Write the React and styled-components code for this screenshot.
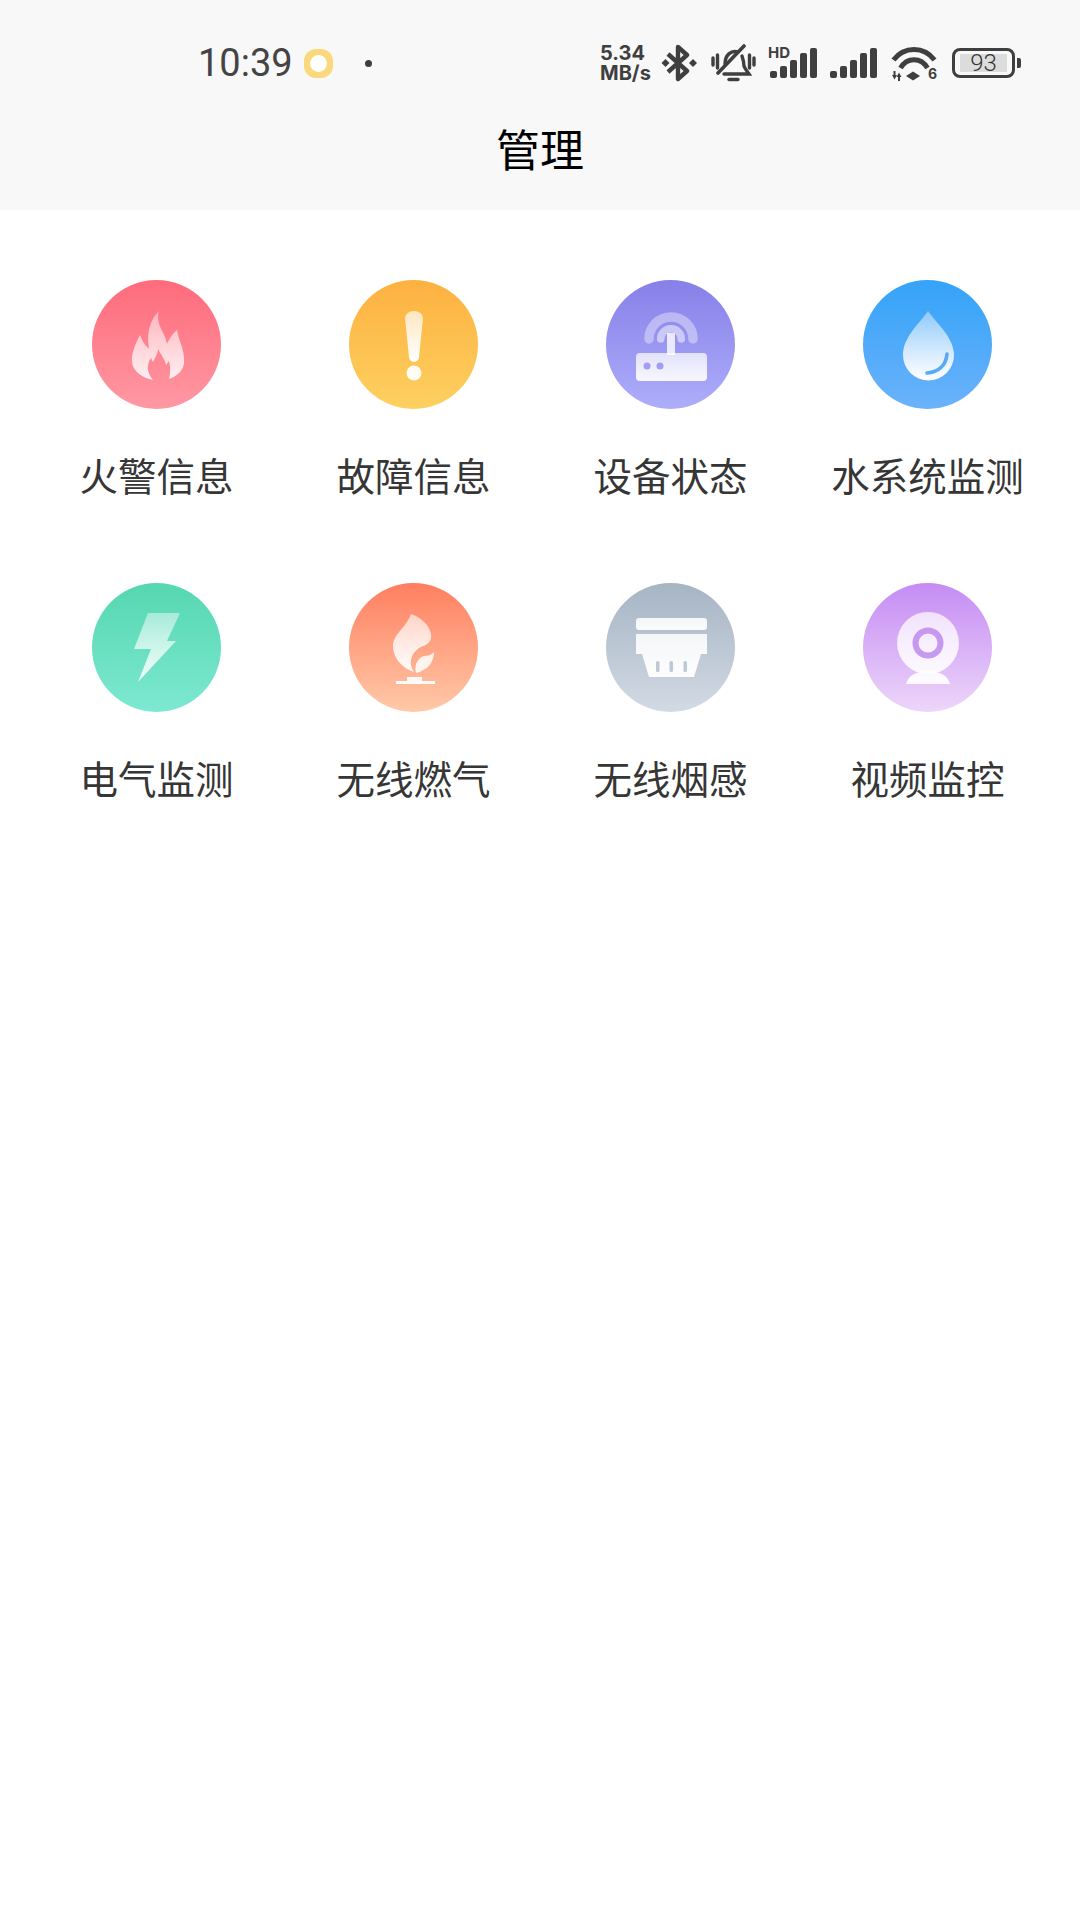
import React from 'react'
import styled, { createGlobalStyle } from 'styled-components';

const GlobalStyle = createGlobalStyle`
  html, body {
    margin: 0;
    padding: 0;
    background: #fff;
  }
  * {
    box-sizing: border-box;
  }
`;

// Shared white fade used by all the round menu icons
const Fade = ({ id, from = 0.55, to = 0.95 }) => (
  <defs>
    <linearGradient id={id} x1="0" y1="0" x2="0" y2="1">
      <stop offset="0" stopColor="#fff" stopOpacity={from} />
      <stop offset="1" stopColor="#fff" stopOpacity={to} />
    </linearGradient>
  </defs>
);

const FireIcon = () => (
  <svg width="128" height="128" viewBox="0 0 128 128">
    <Fade id="fire" from={0.45} to={0.85} />
    <path fill="url(#fire)" d="M66 30C58 38 53 50 56 68C52 64 49 60 47 54C43 62 38 72 39 81C40 91 50 97 60 99C54 92 53 84 58 77L60 81C62 77 65 72 65 68C68 74 72 78 73 84L76 80C78 88 77 94 76 98C85 95 92 88 91 79C91 68 86 60 84 49C80 52 76 58 74 63C72 50 62 44 66 30Z" />
  </svg>
);

const WarnIcon = () => (
  <svg width="128" height="128" viewBox="0 0 128 128">
    <Fade id="warn" from={0.65} to={1} />
    <path fill="url(#warn)" d="M55 37A9 7 0 0 1 73 37L69 76A5 5 0 0 1 59 76Z" />
    <circle cx="64" cy="92" r="7.5" fill="#fff" fillOpacity="0.95" />
  </svg>
);

const RouterIcon = () => (
  <svg width="128" height="128" viewBox="0 0 128 128">
    <Fade id="router" from={0.7} to={0.92} />
    <g fill="none" stroke="#fff" strokeLinecap="round">
      <path d="M42 58A22 22 0 0 1 86 58" strokeWidth="9.5" strokeOpacity="0.38" />
      <path d="M53.7 58A10.3 10.3 0 0 1 74.3 58" strokeWidth="7.5" strokeOpacity="0.5" />
    </g>
    <rect x="60" y="52" width="8" height="22" fill="#fff" fillOpacity="0.8" />
    <rect x="29" y="72" width="71" height="28" rx="4" fill="url(#router)" />
    <circle cx="40" cy="85" r="3.5" fill="#a29ef2" />
    <circle cx="53" cy="85" r="3.5" fill="#a29ef2" />
  </svg>
);

const DropIcon = () => (
  <svg width="128" height="128" viewBox="0 0 128 128">
    <Fade id="drop" from={0.4} to={1} />
    <path fill="url(#drop)" d="M64 30C56 42 39 56 39 74A25.5 25.5 0 0 0 90 74C90 56 72 42 64 30Z" />
    <path d="M63 92C74 91 82 85 83 73" fill="none" stroke="#5aa9f3" strokeWidth="3.6" strokeLinecap="round" />
  </svg>
);

const BoltIcon = () => (
  <svg width="128" height="128" viewBox="0 0 128 128">
    <Fade id="bolt" from={0.45} to={0.9} />
    <path fill="url(#bolt)" d="M55 29H87L74 57H83L45 98L58 65H41Z" />
  </svg>
);

const GasIcon = () => (
  <svg width="128" height="128" viewBox="0 0 128 128">
    <Fade id="gas" from={0.6} to={0.95} />
    <path fill="url(#gas)" d="M61 30C70 33 79 40 81 50C82 56 79 60 73 62C66 65 62 70 61 76C60 81 62 85 64 88C52 84 43 74 43 62C43 50 56 44 61 30Z" />
    <path fill="#fff" fillOpacity="0.85" d="M84 68C84 78 78 86 66 89C64 82 67 74 74 72C78 72 81 71 84 68Z" />
    <rect x="57" y="93" width="15" height="4" fill="#fff" fillOpacity="0.9" />
    <rect x="46" y="97" width="39" height="3" fill="#fff" fillOpacity="0.95" />
  </svg>
);

const SmokeIcon = () => (
  <svg width="128" height="128" viewBox="0 0 128 128">
    <Fade id="smoke" from={0.85} to={0.95} />
    <rect x="29" y="34" width="71" height="12" rx="3" fill="url(#smoke)" />
    <path fill="url(#smoke)" d="M29 50H100V70H94L87 93H42L35 70H29Z" />
    <rect x="49" y="77" width="3.5" height="11" rx="1.5" fill="#bfc9d5" />
    <rect x="62.5" y="77" width="3.5" height="11" rx="1.5" fill="#bfc9d5" />
    <rect x="76.5" y="77" width="3.5" height="11" rx="1.5" fill="#bfc9d5" />
  </svg>
);

const CameraIcon = () => (
  <svg width="128" height="128" viewBox="0 0 128 128">
    <Fade id="camera" from={0.7} to={0.9} />
    <path fill="#fff" fillOpacity="0.9" d="M42 100C44 92 52 87 64 87C76 87 84 92 86 100Z" />
    <circle cx="64" cy="59" r="31" fill="url(#camera)" />
    <circle cx="64" cy="59" r="12.5" fill="none" stroke="#c798f0" strokeWidth="6" />
  </svg>
);

const MENU_ITEMS = [
  { label: '火警信息', from: '#fe6b7c', to: '#ff98a3', icon: FireIcon },
  { label: '故障信息', from: '#fdb140', to: '#fdd060', icon: WarnIcon },
  { label: '设备状态', from: '#8680e8', to: '#aeadfb', icon: RouterIcon },
  { label: '水系统监测', from: '#34a3f8', to: '#6bb2fb', icon: DropIcon },
  { label: '电气监测', from: '#55d7b0', to: '#7de8d1', icon: BoltIcon },
  { label: '无线燃气', from: '#ff7f60', to: '#ffc9a8', icon: GasIcon },
  { label: '无线烟感', from: '#a6b4c4', to: '#d2dae4', icon: SmokeIcon },
  { label: '视频监控', from: '#c58cf4', to: '#edd6f9', icon: CameraIcon },
];

const SIGNAL_BARS = [7, 12, 18, 25, 30];

const SignalBars = () => (
  <svg width="50" height="32" viewBox="0 0 50 32">
    {SIGNAL_BARS.map((h, i) => (
      <rect key={i} x={2 + i * 10} y={31 - h} width="7" height={h} rx="2" fill="#3f3f3f" />
    ))}
  </svg>
);

const BluetoothIcon = () => (
  <svg width="36" height="38" viewBox="0 0 36 38">
    <path d="M7 10L26 27L17 35V3L26 11L7 28" fill="none" stroke="#3f3f3f" strokeWidth="4.4" strokeLinejoin="round" />
    <path d="M0.5 19L4.5 15L8.5 19L4.5 23Z M28 19L32 15L36 19L32 23Z" fill="#3f3f3f" />
  </svg>
);

const MuteIcon = () => (
  <svg width="45" height="38" viewBox="0 0 45 38">
    <g fill="none" stroke="#3f3f3f" strokeWidth="3.4" strokeLinecap="round">
      <path d="M33 2L7 29" strokeWidth="3.6" />
      <path d="M2 14V21M6.5 11V24M38.5 11V24M43 14V21" />
      <path d="M14 20C14 11 20 6 27 8" />
      <path d="M31 12C32 15 33 19 33 22C34 25 36 27 38 30H13" />
      <path d="M18 35.5H27" strokeWidth="3.4" />
    </g>
  </svg>
);

const WifiIcon = () => (
  <WifiSlot>
    <svg width="46" height="35" viewBox="0 0 46 35">
      <g fill="none" stroke="#3f3f3f" strokeWidth="5">
        <path d="M2.5 14C13 0 33 0 43.5 14" />
        <path d="M9.5 22C16 11 30 11 36.5 22" />
      </g>
      <path d="M15 30L22 25.5L29 30L22 34.5Z" fill="#3f3f3f" />
      <path d="M1 29L3.5 33.5L6 29H4.5V25H2.5V29Z M7 31V35H9V31H10.5L8 26.5L5.5 31Z" fill="#3f3f3f" />
    </svg>
    <WifiBand>6</WifiBand>
  </WifiSlot>
);

export default function App() {
  return (
    <Page>
      <GlobalStyle />
      <Header>
        <StatusBar>
          <Time>10:39</Time>
          <NotifyBadge />
          <NotifyDot />
          <StatusIcons>
            <Speed>
              <span>5.34</span>
              <span>MB/s</span>
            </Speed>
            <IconSlot $gap={9}><BluetoothIcon /></IconSlot>
            <IconSlot $gap={14}><MuteIcon /></IconSlot>
            <IconSlot $gap={12}>
              <HdTag>HD</HdTag>
              <SignalBars />
            </IconSlot>
            <IconSlot $gap={10}><SignalBars /></IconSlot>
            <IconSlot $gap={13}><WifiIcon /></IconSlot>
            <Battery>
              <BatteryBody>
                <BatteryFill>93</BatteryFill>
              </BatteryBody>
              <BatteryNub />
            </Battery>
          </StatusIcons>
        </StatusBar>
        <Title>管理</Title>
      </Header>
      <MenuGrid>
        {MENU_ITEMS.map((item) => {
          const Icon = item.icon;
          return (
            <MenuItem key={item.label}>
              <IconCircle $from={item.from} $to={item.to}>
                <Icon />
              </IconCircle>
              <MenuLabel>{item.label}</MenuLabel>
            </MenuItem>
          );
        })}
      </MenuGrid>
    </Page>
  )
}

const Page = styled.div`
  width: 1080px;
  height: 1920px;
  background: #fff;
  overflow: hidden;
  font-family: "Noto Sans CJK SC", "Noto Sans", sans-serif;
`;

const Header = styled.header`
  height: 210px;
  padding-top: 44px;
  background: #f8f8f8;
`;

const StatusBar = styled.div`
  display: flex;
  align-items: center;
  height: 38px;
  padding: 0 59px 0 198px;
`;

const Time = styled.span`
  font-family: Roboto, sans-serif;
  font-size: 38px;
  line-height: 38px;
  color: #444;
`;

const NotifyBadge = styled.span`
  position: relative;
  width: 29px;
  height: 29px;
  margin-left: 11px;
  border-radius: 12px;
  background: #f9d97b;

  &::after {
    content: '';
    position: absolute;
    top: 6px;
    left: 6px;
    width: 17px;
    height: 17px;
    border-radius: 50%;
    background: #fff;
  }
`;

const NotifyDot = styled.span`
  width: 7px;
  height: 7px;
  margin-left: 32px;
  border-radius: 50%;
  background: #3f3f3f;
`;

const StatusIcons = styled.div`
  display: flex;
  align-items: center;
  margin-left: auto;
`;

const IconSlot = styled.div`
  position: relative;
  display: flex;
  flex-shrink: 0;
  margin-left: ${(props) => props.$gap}px;
`;

const WifiSlot = styled.div`
  position: relative;
  display: flex;
`;

const Speed = styled.div`
  display: flex;
  flex-direction: column;
  width: 52px;
  font-family: Inter, sans-serif;
  font-size: 20px;
  font-weight: 700;
  line-height: 20px;
  color: #3f3f3f;
`;

const HdTag = styled.span`
  position: absolute;
  top: -2px;
  left: 0;
  font-family: Inter, sans-serif;
  font-size: 15px;
  font-weight: 700;
  line-height: 15px;
  color: #3f3f3f;
`;

const WifiBand = styled.span`
  position: absolute;
  right: 0;
  bottom: 0;
  font-family: Inter, sans-serif;
  font-size: 14px;
  font-weight: 700;
  line-height: 14px;
  color: #3f3f3f;
`;

const Battery = styled.div`
  display: flex;
  align-items: center;
  gap: 2px;
  margin-left: 15px;
`;

const BatteryBody = styled.div`
  width: 63px;
  height: 30px;
  padding: 3px 5px;
  border: 3px solid #3f3f3f;
  border-radius: 8px;
`;

const BatteryFill = styled.div`
  display: flex;
  align-items: center;
  justify-content: center;
  height: 100%;
  background: #dcdcdc;
  font-family: Roboto, sans-serif;
  font-size: 24px;
  font-weight: 300;
  line-height: 18px;
  color: #333;
`;

const BatteryNub = styled.div`
  width: 4px;
  height: 10px;
  border-radius: 0 2px 2px 0;
  background: #3f3f3f;
`;

const Title = styled.h1`
  margin: 44px 0 0;
  font-size: 44px;
  font-weight: 400;
  line-height: 44px;
  text-align: center;
  color: #000;
`;

const MenuGrid = styled.main`
  display: grid;
  grid-template-columns: repeat(4, 257px);
  row-gap: 86px;
  padding: 70px 0 0 28px;
`;

const MenuItem = styled.div`
  display: flex;
  flex-direction: column;
  align-items: center;
  gap: 42px;
`;

const IconCircle = styled.div`
  display: flex;
  align-items: center;
  justify-content: center;
  width: 129px;
  height: 129px;
  border-radius: 50%;
  background: linear-gradient(180deg, ${(props) => props.$from}, ${(props) => props.$to});
`;

const MenuLabel = styled.span`
  font-size: 38.5px;
  line-height: 46px;
  white-space: nowrap;
  color: #363636;
`;
